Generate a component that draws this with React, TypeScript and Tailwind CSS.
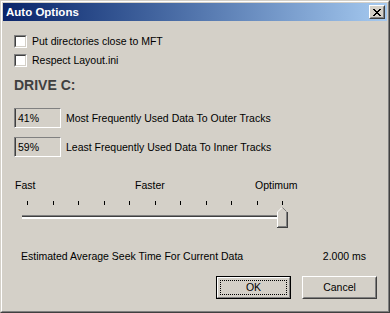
const sans = "font-['Liberation_Sans',Arial,sans-serif]"

function Checkbox({ label }: { label: string }) {
  return (
    <div className="flex h-[13px] items-center gap-[5px]">
      <div className="flex h-[13px] w-[13px] border border-t-[#808080] border-l-[#808080] border-r-white border-b-white">
        <div className="flex-1 border border-t-[#404040] border-l-[#404040] border-r-[#d4d0c8] border-b-[#d4d0c8] bg-white" />
      </div>
      <span className="leading-[13px]">{label}</span>
    </div>
  )
}

function Percent({ value, label }: { value: string; label: string }) {
  return (
    <div className="flex items-center gap-[5px]">
      <div className="flex h-[20px] w-[47px] border border-t-[#808080] border-l-[#808080] border-r-white border-b-white">
        <div className="flex flex-1 items-center border-l border-l-[#404040] pl-[2px] leading-[13px]">{value}</div>
      </div>
      <span className="leading-[13px]">{label}</span>
    </div>
  )
}

// trackbar drawn as one picture: ticks, channel, pointed thumb
function Slider() {
  const ticks = [27, 53, 78, 104, 129, 155, 180, 206, 231, 257, 282]
  return (
    <svg width="290" height="30" viewBox="0 0 290 30" shapeRendering="crispEdges" className="block">
      {ticks.map((x) => (
        <rect key={x} x={x - 14} y={2} width={1} height={4} fill="#000" />
      ))}
      <rect x={8} y={16} width={262} height={1} fill="#808080" />
      <rect x={8} y={17} width={262} height={1} fill="#404040" />
      <rect x={8} y={18} width={262} height={2} fill="#ffffff" />
      <polygon points="263,13 268,8 273,13 273,28 263,28" fill="#d4d0c8" />
      <path d="M263.5 28 V13 L268 8.5" stroke="#ffffff" fill="none" shapeRendering="auto" />
      <path d="M268.5 8.5 L272.5 12.5" stroke="#808080" fill="none" shapeRendering="auto" />
      <rect x={273} y={13} width={1} height={16} fill="#404040" />
      <rect x={263} y={28} width={11} height={1} fill="#404040" />
      <rect x={272} y={13} width={1} height={15} fill="#808080" />
      <rect x={264} y={27} width={8} height={1} fill="#808080" />
    </svg>
  )
}

export default function App() {
  return (
    <div className={`${sans} h-[313px] w-[390px] border border-t-[#d4d0c8] border-l-[#d4d0c8] border-r-[#404040] border-b-[#404040] bg-[#d4d0c8] text-[10.5px] text-black`}>
      <div className="flex h-full flex-col border border-t-white border-l-white border-r-[#808080] border-b-[#808080] p-px">
        {/* title bar */}
        <div className="flex h-[18px] items-center justify-between bg-linear-to-r from-[#0a246a] to-[#a6caf0] pl-[3px] pr-[2px]">
          <span className="text-[11.5px] font-bold leading-[18px] text-white">Auto Options</span>
          <div className="flex h-[14px] w-[16px] border border-t-white border-l-white border-r-[#404040] border-b-[#404040]">
            <div className="flex flex-1 items-center justify-center border border-t-[#d4d0c8] border-l-[#d4d0c8] border-r-[#808080] border-b-[#808080] bg-[#d4d0c8]">
              <svg width="8" height="7" viewBox="0 0 8 7" shapeRendering="crispEdges">
                <path d="M0 0h2v1h1v1h2v-1h1v-1h2v1h-1v1h-1v1h-1v1h1v1h1v1h1v1h-2v-1h-1v-1h-2v1h-1v1h-2v-1h1v-1h1v-1h1v-1h-1v-1h-1v-1h-1z" fill="#000" />
              </svg>
            </div>
          </div>
        </div>

        <div className="flex flex-1 flex-col pl-[11px]">
          <div className="mt-[14px]">
            <Checkbox label="Put directories close to MFT" />
          </div>
          <div className="mt-[6px]">
            <Checkbox label="Respect Layout.ini" />
          </div>

          <div className="mt-[10px] text-[14px] font-bold leading-[16px] text-[#404040]">DRIVE C:</div>

          <div className="mt-[15px]">
            <Percent value="41%" label="Most Frequently Used Data To Outer Tracks" />
          </div>
          <div className="mt-[9px]">
            <Percent value="59%" label="Least Frequently Used Data To Inner Tracks" />
          </div>

          <div className="mt-[22px] flex pl-px leading-[13px]">
            <span className="w-[120px]">Fast</span>
            <span className="w-[120px]">Faster</span>
            <span>Optimum</span>
          </div>
          <div className="mt-[7px]">
            <Slider />
          </div>

          <div className="mt-[21px] flex w-[352px] justify-between pl-[7px] leading-[13px]">
            <span>Estimated Average Seek Time For Current Data</span>
            <span>2.000 ms</span>
          </div>

          <div className="mt-[13px] flex justify-end gap-[11px] pr-[10px]">
            <button className="flex h-[23px] w-[75px] border border-black bg-[#d4d0c8]">
              <div className="flex flex-1 border border-t-white border-l-white border-r-[#808080] border-b-[#808080] p-[2px]">
                <div className="flex flex-1 items-center justify-center border border-dotted border-black leading-[13px]">OK</div>
              </div>
            </button>
            <button className="flex h-[23px] w-[75px] border border-t-white border-l-white border-r-[#404040] border-b-[#404040] bg-[#d4d0c8]">
              <div className="flex flex-1 items-center justify-center border border-t-[#d4d0c8] border-l-[#d4d0c8] border-r-[#808080] border-b-[#808080] leading-[13px]">
                Cancel
              </div>
            </button>
          </div>
        </div>
      </div>
    </div>
  )
}
